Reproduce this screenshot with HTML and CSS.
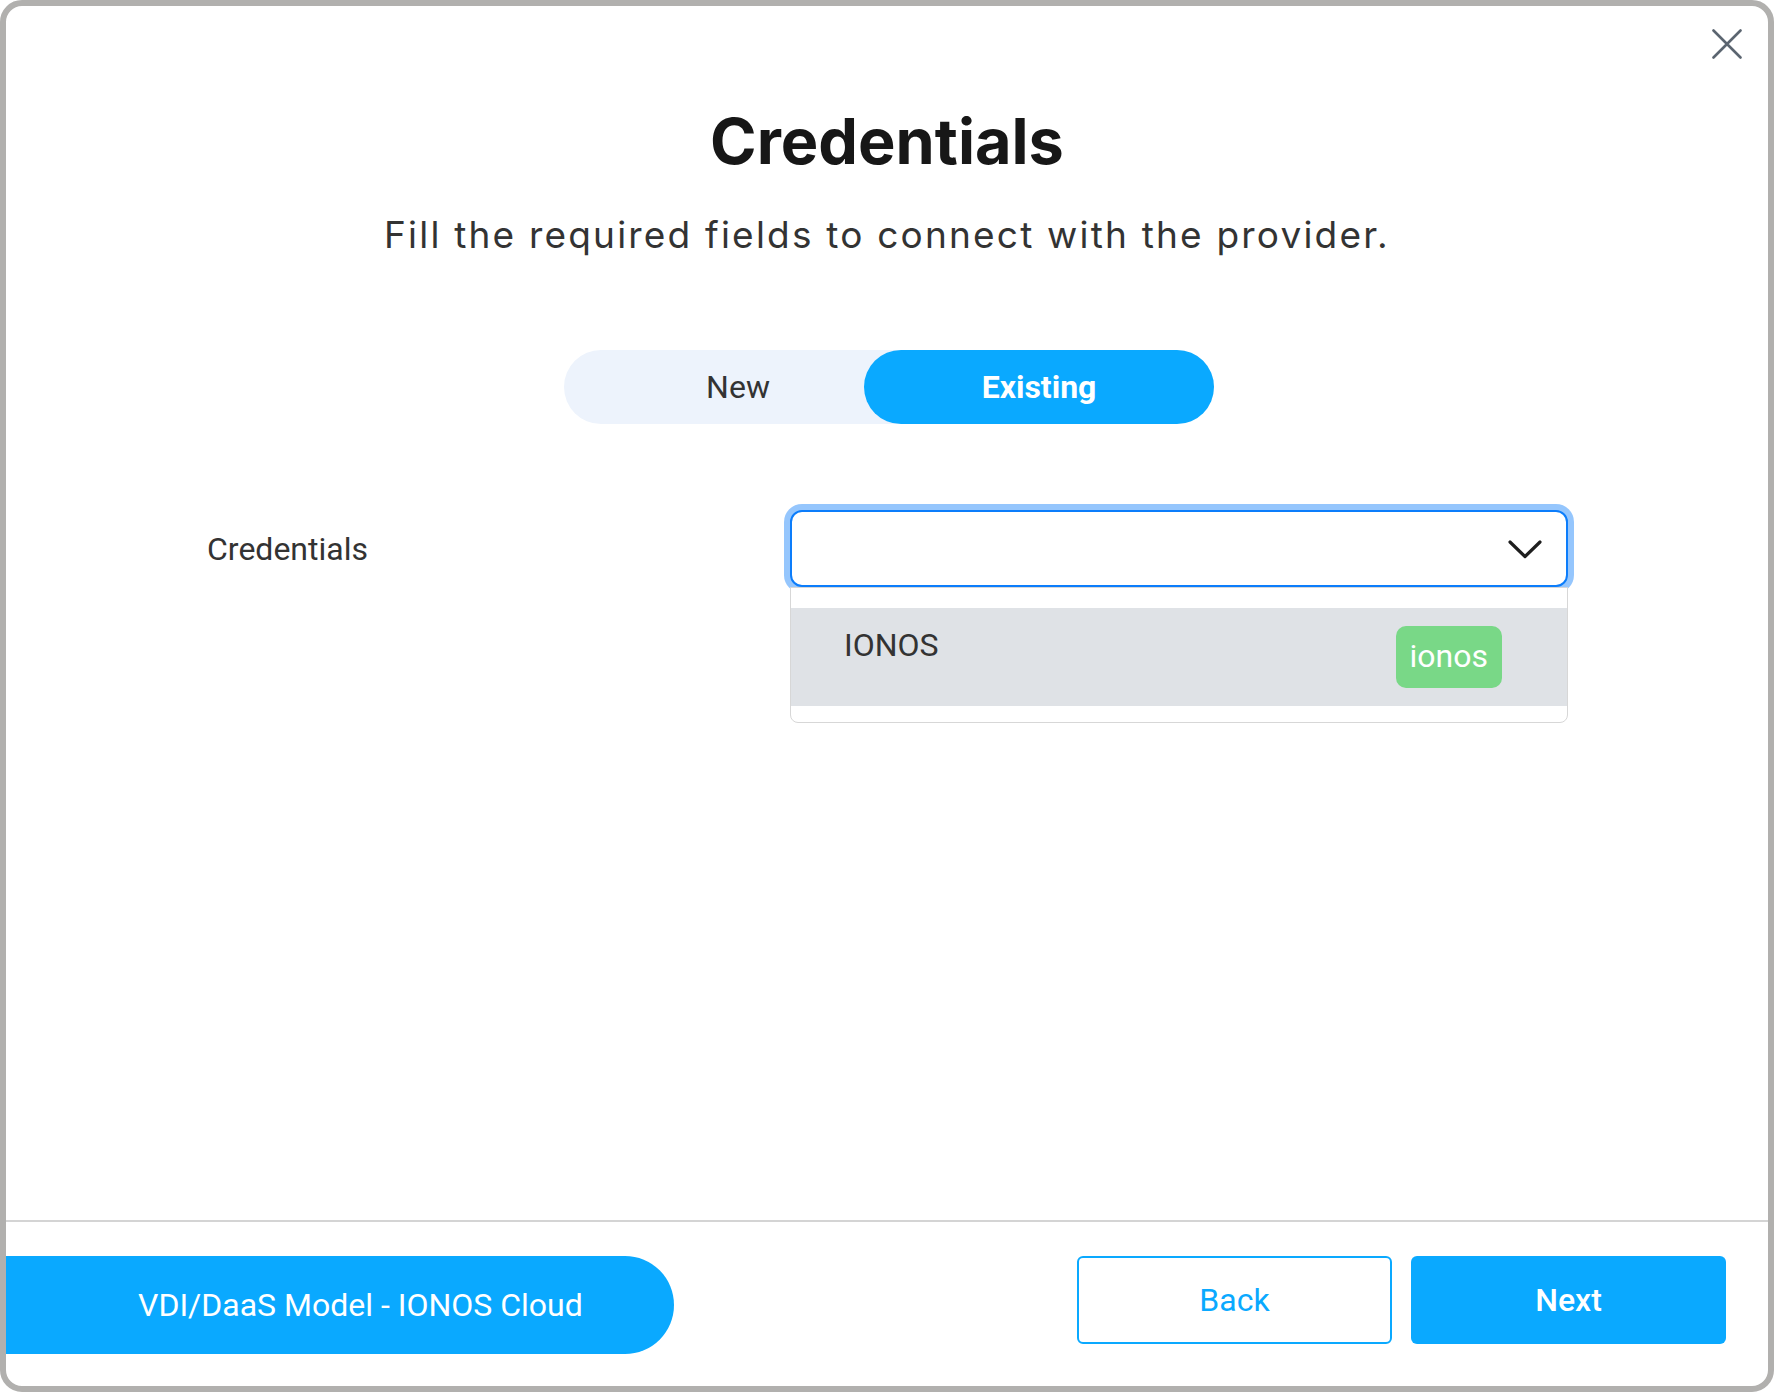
FILE: index.html
```html
<!DOCTYPE html>
<html lang="en">
<head>
<meta charset="utf-8">
<title>Credentials</title>
<link rel="stylesheet" href="styles.css">
</head>
<body>
<div class="modal">
  <button class="close" aria-label="Close">
    <svg width="30" height="30" viewBox="0 0 30 30"><path d="M1.5 1.5 L28.5 28.5 M28.5 1.5 L1.5 28.5" stroke="#5b6570" stroke-width="2.6" stroke-linecap="round" fill="none"/></svg>
  </button>
  <main class="content">
    <h1 class="title">Credentials</h1>
    <p class="subtitle">Fill the required fields to connect with the provider.</p>
    <div class="toggle">
      <button class="seg seg-new">New</button>
      <button class="seg seg-active">Existing</button>
    </div>
    <div class="form-row">
      <label class="label">Credentials</label>
      <div class="select-wrap">
        <div class="select">
          <svg class="chevron" width="34" height="19" viewBox="0 0 34 19"><path d="M2 2 L17 16.5 L32 2" stroke="#1e1e1e" stroke-width="3.2" fill="none" stroke-linecap="round" stroke-linejoin="round"/></svg>
        </div>
        <div class="menu">
          <div class="option">
            <span class="option-text">IONOS</span>
            <span class="badge">ionos</span>
          </div>
        </div>
      </div>
    </div>
  </main>
  <footer class="footer">
    <div class="model">VDI/DaaS Model - IONOS Cloud</div>
    <div class="actions">
      <button class="btn btn-back">Back</button>
      <button class="btn btn-next">Next</button>
    </div>
  </footer>
</div>
</body>
</html>
```

FILE: styles.css
```css
* { box-sizing: border-box; }
html, body { margin: 0; background: #fff; }
body { font-family: Roboto, "Liberation Sans", sans-serif; }

.modal {
  width: 1774px;
  height: 1392px;
  border: 6px solid #b1b0ae;
  border-radius: 22px;
  display: flex;
  flex-direction: column;
  position: relative;
  overflow: hidden;
  background: #fff;
}

.close {
  position: absolute;
  top: 23px;
  right: 26px;
  width: 30px;
  height: 30px;
  padding: 0;
  border: 0;
  background: transparent;
  display: block;
}
.close svg { display: block; }

.content {
  flex: 1;
  display: flex;
  flex-direction: column;
  align-items: center;
  padding-top: 95px;
}

.title {
  margin: 0;
  font-family: Inter, "Noto Sans", sans-serif;
  font-weight: 700;
  font-size: 63px;
  line-height: 80px;
  color: #171717;
}

.subtitle {
  margin: 30px 0 0;
  font-family: Inter, "Noto Sans", sans-serif;
  font-weight: 400;
  font-size: 37px;
  line-height: 48px;
  letter-spacing: 2.2px;
  color: #333;
}

.toggle {
  margin-top: 91px;
  margin-left: 4px;
  width: 650px;
  height: 74px;
  border-radius: 37px;
  background: #edf3fc;
  display: flex;
}
.seg {
  border: 0;
  background: transparent;
  font-family: Roboto, "Liberation Sans", sans-serif;
  font-size: 32px;
  color: #333;
  padding: 0;
  height: 74px;
}
.seg-new { width: 300px; padding-left: 48px; }
.seg-active {
  width: 350px;
  background: #0aa9ff;
  color: #fff;
  font-weight: 700;
  border-radius: 37px;
}

.form-row {
  align-self: stretch;
  display: flex;
  align-items: center;
  margin-top: 86px;
  padding: 0 200px 0 201px;
}
.label {
  width: 583px;
  font-size: 32px;
  line-height: 48px;
  color: #333;
}
.select-wrap {
  flex: 1;
  position: relative;
}
.select {
  height: 77px;
  border: 2px solid #0c7dfb;
  border-radius: 12px;
  box-shadow: 0 0 0 6px #95c6fd;
  background: #fff;
  display: flex;
  align-items: center;
  justify-content: flex-end;
  padding-right: 24px;
}
.chevron { display: block; margin-top: 2px; }

.menu {
  position: absolute;
  top: 77px;
  left: 0;
  right: 0;
  height: 136px;
  border: 1px solid #d7d7d7;
  border-radius: 0 0 8px 8px;
  background: #fff;
  padding-top: 20px;
  z-index: 2;
}
.option {
  height: 98px;
  background: #dfe2e6;
  display: flex;
  justify-content: space-between;
  align-items: flex-start;
  padding: 13px 65px 0 53px;
}
.option-text {
  font-size: 32px;
  line-height: 48px;
  color: #333;
}
.badge {
  margin-top: 5px;
  height: 62px;
  padding: 0 14px;
  border-radius: 10px;
  background: #79d887;
  color: #fff;
  font-size: 32px;
  line-height: 60px;
}

.footer {
  border-top: 2px solid #d4d4d4;
  padding: 34px 42px 32px 0;
  display: flex;
  justify-content: space-between;
  align-items: flex-start;
}
.model {
  height: 98px;
  padding: 0 91px 0 132px;
  background: #0aa9ff;
  color: #fff;
  border-radius: 0 49px 49px 0;
  font-size: 32px;
  line-height: 98px;
  white-space: nowrap;
}
.actions {
  display: flex;
  gap: 19px;
}
.btn {
  width: 315px;
  height: 88px;
  border-radius: 6px;
  font-family: Roboto, "Liberation Sans", sans-serif;
  font-size: 32px;
  padding: 0;
}
.btn-back {
  background: #fff;
  border: 2px solid #0aa9ff;
  color: #0aa9ff;
}
.btn-next {
  background: #0aa9ff;
  border: 0;
  color: #fff;
  font-weight: 500;
}
```
